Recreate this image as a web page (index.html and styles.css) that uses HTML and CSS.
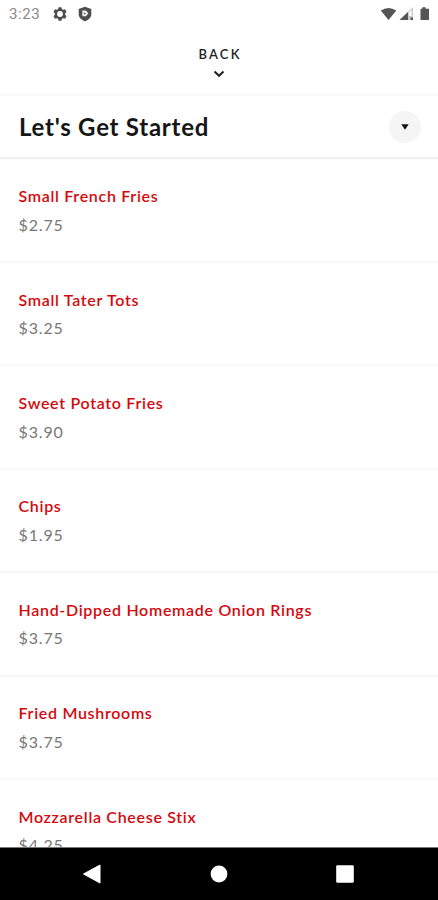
FILE: index.html
```html
<!DOCTYPE html>
<html lang="en">
<head>
<meta charset="utf-8">
<title>Let's Get Started</title>
<link rel="stylesheet" href="styles.css">
</head>
<body>
<div class="screen">
  <header class="status">
    <span class="time">3:23</span>
    <svg class="gear" width="14" height="14" viewBox="0 0 14 14"><path fill="#4d4d4d" fill-rule="evenodd" d="M5.600.3h2.800l.6 1.900 1 .5 2-.5 1.500 2.500L12.200 6.300v1.400l1.300 1.600-1.500 2.500-2-.5-1 .5-.6 1.900H5.600L5 11.800l-1-.5-2 .5L.5 9.300l1.300-1.600V6.300L.5 4.700 2 2.200l2 .5 1-.5zM7 4.100a2.900 2.900 0 1 0 0 5.800 2.900 2.900 0 0 0 0-5.800z"/></svg>
    <svg class="shield" width="14" height="16" viewBox="0 0 14 16"><path fill="#4d4d4d" d="M7 .8 13.300 3v5c0 3.500-2.600 6-6.300 7.300C3.300 14 .7 11.500.7 8V3z"/><path fill="#eee" d="M4.300 4.400H8L10.300 7.300 8 10.300H4.300z"/><path fill="#777" d="M5.800 6.200 8.200 7.400 5.800 8.800z"/></svg>
    <span class="spacer"></span>
    <svg class="signals" width="50" height="16" viewBox="0 0 50 16"><path fill="#555" d="M.8 4.500Q8.500-.7 16.300 4.500L8.500 14z"/><path fill="#ccc" d="M33 1v13H19.500z"/><path fill="#555" d="M28 6v8h-8.500zM30.500 11.500H33V14h-2.500z"/><path fill="#fff" d="M29 6.500 31.500 4v6H29z"/><path fill="#555" d="M42.300 1.200h3.400v1.500H49V14h-8.500V2.700h1.800z"/></svg>
  </header>
  <div class="back">
    <span class="back-label">BACK</span>
    <svg width="12" height="8" viewBox="0 0 12 8"><path d="M1.500 1.500 6 5.800l4.500-4.300" fill="none" stroke="#222" stroke-width="2"/></svg>
  </div>
  <div class="heading">
    <h1>Let's Get Started</h1>
    <span class="toggle"><svg width="8" height="6" viewBox="0 0 8 6"><path d="M.3.300h7.400L4 5.700z" fill="#111"/></svg></span>
  </div>
  <main class="menu">
    <div class="item"><div class="name">Small French Fries</div><div class="price">$2.75</div></div>
    <div class="item"><div class="name">Small Tater Tots</div><div class="price">$3.25</div></div>
    <div class="item"><div class="name">Sweet Potato Fries</div><div class="price">$3.90</div></div>
    <div class="item"><div class="name">Chips</div><div class="price">$1.95</div></div>
    <div class="item"><div class="name">Hand-Dipped Homemade Onion Rings</div><div class="price">$3.75</div></div>
    <div class="item"><div class="name">Fried Mushrooms</div><div class="price">$3.75</div></div>
    <div class="item"><div class="name">Mozzarella Cheese Stix</div><div class="price">$4.25</div></div>
  </main>
  <nav class="navbar">
    <svg width="18" height="20" viewBox="0 0 18 20"><path d="M17 1v18L.5 10z" fill="#fff" stroke="#fff" stroke-linejoin="round"/></svg>
    <svg width="18" height="18" viewBox="0 0 18 18"><circle cx="9" cy="9" r="8.400" fill="#fff"/></svg>
    <svg width="18" height="18" viewBox="0 0 18 18"><rect x=".2" y=".2" width="17.600" height="17.600" rx="1.200" fill="#fff"/></svg>
  </nav>
</div>
</body>
</html>
```
FILE: styles.css
```css
* { box-sizing: border-box; }
body { margin: 0; background: #fff; font-family: Lato, sans-serif; }
svg { display: block; flex: none; }
.screen { width: 438px; height: 900px; display: flex; flex-direction: column; overflow: hidden; background: #fff; }
.status { height: 28px; flex: none; display: flex; align-items: center; padding: 0 8px 0 9px; }
.time { width: 44px; font: 15px/28px Roboto, sans-serif; color: #888; letter-spacing: .6px; }
.shield { margin-left: 11px; }
.spacer { flex: 1; }
.back { height: 68px; flex: none; display: flex; flex-direction: column; align-items: center; padding-top: 17px; border-bottom: 2px solid #f7f7f7; }
.back-label { font-size: 13px; line-height: 18px; letter-spacing: 2.2px; padding-left: 2px; color: #222; font-weight: 600; }
.back svg { margin-top: 7px; }
.heading { height: 63px; flex: none; display: flex; align-items: center; justify-content: space-between; padding: 0 17px 0 19px; border-bottom: 2px solid #f0f0f0; }
h1 { margin: 0; font-size: 24px; line-height: 30px; font-weight: 700; letter-spacing: .75px; color: #161616; }
.toggle { width: 32px; height: 32px; border-radius: 50%; background: #f5f5f5; display: flex; align-items: center; justify-content: center; }
.menu { flex: 1; min-height: 0; overflow: hidden; padding-top: .7px; }
.item { height: 103.400px; padding: 24.500px 18.500px 0; border-bottom: 2px solid #f7f7f7; }
.name { font-size: 16px; line-height: 24px; font-weight: 600; letter-spacing: .69px; color: #d3090d; white-space: nowrap; }
.price { margin-top: 4.600px; font-size: 16px; line-height: 24px; letter-spacing: .85px; color: #777; }
.navbar { height: 53px; flex: none; background: #000; border-top: 1px solid #777; display: flex; align-items: center; justify-content: space-between; padding: 0 84px 0 83px; }
```
